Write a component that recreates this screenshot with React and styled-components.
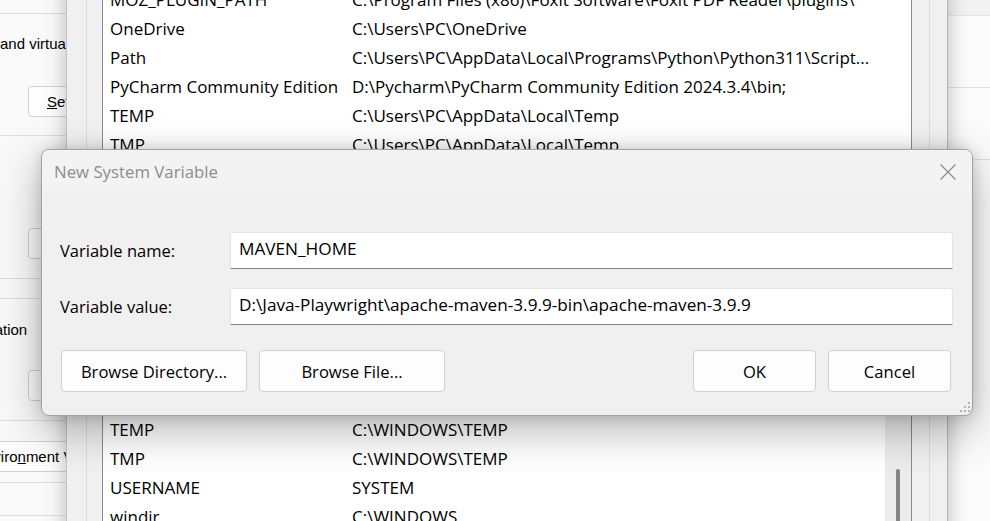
import React from 'react'
import styled, {createGlobalStyle} from 'styled-components'

const GlobalStyle = createGlobalStyle`
  html, body {
    margin: 0;
    padding: 0;
  }
  body {
    width: 990px;
    height: 521px;
    overflow: hidden;
    font-family: "Open Sans", "Noto Sans", sans-serif;
  }
`

const userVars = [
    ['MOZ_PLUGIN_PATH', 'C:\\Program Files (x86)\\Foxit Software\\Foxit PDF Reader\\plugins\\'],
    ['OneDrive', 'C:\\Users\\PC\\OneDrive'],
    ['Path', 'C:\\Users\\PC\\AppData\\Local\\Programs\\Python\\Python311\\Script...'],
    ['PyCharm Community Edition', 'D:\\Pycharm\\PyCharm Community Edition 2024.3.4\\bin;'],
    ['TEMP', 'C:\\Users\\PC\\AppData\\Local\\Temp'],
    ['TMP', 'C:\\Users\\PC\\AppData\\Local\\Temp'],
]

// rows above TEMP are scrolled under the dialog, so only an offset is kept
const systemVars = [
    ['TEMP', 'C:\\WINDOWS\\TEMP'],
    ['TMP', 'C:\\WINDOWS\\TEMP'],
    ['USERNAME', 'SYSTEM'],
    ['windir', 'C:\\WINDOWS'],
]

function App() {
  return (
    <Desktop>
        <GlobalStyle />

        <BackWindow>
            <BackSection $h={14} />
            <BackSection $h={122} $pt={20}>
                <BackText>and virtual memory</BackText>
                <BackButton $mt={32}><u>S</u>ettings...</BackButton>
            </BackSection>
            <BackSection $h={143} $pt={92}>
                <BackButton />
            </BackSection>
            <BackSection $h={20} />
            <BackSection $h={122} $pt={21}>
                <BackText $indent={-47}>information</BackText>
                <BackButton $mt={30} />
            </BackSection>
            <BackSection $h={62} $pt={20}>
                <BackButton $shift={-38}>Enviro<u>n</u>ment Variables...</BackButton>
            </BackSection>
            <BackSection $h={33} />
        </BackWindow>

        <SideWindow>
            <SideBand />
            <SideBlock />
            <SideBlock />
        </SideWindow>

        <EnvWindow>
            <Group>
                <VarList $h={232}>
                    <Rows>
                        {userVars.map(([name, value]) => (
                            <Row key={name}>
                                <NameCell>{name}</NameCell>
                                <ValueCell>{value}</ValueCell>
                            </Row>
                        ))}
                    </Rows>
                </VarList>
                <HiddenGap />
                <VarList $h={260}>
                    <Rows $offset={87}>
                        {systemVars.map(([name, value]) => (
                            <Row key={name}>
                                <NameCell>{name}</NameCell>
                                <ValueCell>{value}</ValueCell>
                            </Row>
                        ))}
                    </Rows>
                    <ScrollTrack>
                        <ScrollThumb />
                    </ScrollTrack>
                </VarList>
            </Group>
        </EnvWindow>

        <Dialog>
            <TitleBar>
                <Title>New System Variable</Title>
                <CloseBox>
                    <svg width="16" height="16" viewBox="0 0 16 16">
                        <path d="M0.5 0.5 L15.5 15.5 M15.5 0.5 L0.5 15.5" stroke="#8a8a8a" strokeWidth="1.1" fill="none" />
                    </svg>
                </CloseBox>
            </TitleBar>
            <Body>
                <Field>
                    <Label>Variable name:</Label>
                    <TextBox defaultValue="MAVEN_HOME" />
                </Field>
                <Field>
                    <Label>Variable value:</Label>
                    <TextBox defaultValue="D:\Java-Playwright\apache-maven-3.9.9-bin\apache-maven-3.9.9" />
                </Field>
                <ButtonRow>
                    <Button>Browse Directory...</Button>
                    <Button>Browse File...</Button>
                    <Spacer />
                    <Button $w={123}>OK</Button>
                    <Button $w={123}>Cancel</Button>
                </ButtonRow>
            </Body>
            <Grip>
                <svg width="12" height="12" viewBox="0 0 12 12">
                    <rect x="9" y="0" width="2" height="2" fill="#b4b4b4" />
                    <rect x="5" y="4" width="2" height="2" fill="#b4b4b4" />
                    <rect x="9" y="4" width="2" height="2" fill="#b4b4b4" />
                    <rect x="1" y="8" width="2" height="2" fill="#b4b4b4" />
                    <rect x="5" y="8" width="2" height="2" fill="#b4b4b4" />
                    <rect x="9" y="8" width="2" height="2" fill="#b4b4b4" />
                </svg>
            </Grip>
        </Dialog>
    </Desktop>
  )
}

export default App

const Desktop = styled.div `
    position: relative;
    width: 990px;
    height: 521px;
    overflow: hidden;
    background: #f3f3f3;
`

const BackWindow = styled.div `
    position: absolute;
    left: 0;
    top: 0;
    width: 200px;
    height: 521px;
    background: #f9f9f9;
    display: flex;
    flex-direction: column;
    font-family: "Liberation Sans", Arial, sans-serif;
    font-size: 15px;
    color: #000;
`

const BackSection = styled.div `
    box-sizing: border-box;
    height: ${p => p.$h}px;
    flex: none;
    padding-top: ${p => p.$pt || 0}px;
    border-bottom: 1px solid #dedede;
    display: flex;
    flex-direction: column;
    align-items: flex-start;
    overflow: hidden;
`

const BackText = styled.div `
    line-height: 20px;
    white-space: nowrap;
    margin-left: ${p => p.$indent || 0}px;
`

const BackButton = styled.div `
    box-sizing: border-box;
    min-width: 90px;
    height: 31px;
    flex: none;
    margin-top: ${p => p.$mt || 0}px;
    margin-left: ${p => p.$shift !== undefined ? p.$shift : 28}px;
    padding: 0 18px 0 ${p => p.$shift !== undefined ? 12 : 18}px;
    border: 1px solid #d0d0d0;
    border-radius: 4px;
    background: #fdfdfd;
    display: flex;
    align-items: center;
    white-space: nowrap;
`

const SideWindow = styled.div `
    position: absolute;
    left: 930px;
    top: 0;
    width: 80px;
    height: 521px;
    background: #fbfbfb;
    display: flex;
    flex-direction: column;
`

const SideBand = styled.div `
    height: 15px;
    background: #f3f3f3;
    border-bottom: 1px solid #e6e6e6;
`

const SideBlock = styled.div `
    height: 71px;
    border-bottom: 1px solid #e0e0e0;
`

const EnvWindow = styled.div `
    position: absolute;
    left: 66px;
    top: -30px;
    width: 882px;
    height: 600px;
    box-sizing: border-box;
    padding: 0 17px 0 19px;
    background: #f0f0f0;
    border-left: 1px solid #c2c2c2;
    border-right: 1px solid #b4b4b4;
    box-shadow: 0 0 20px rgba(0, 0, 0, 0.26);
`

const Group = styled.div `
    height: 100%;
    box-sizing: border-box;
    padding: 14px 17px 0 15px;
    border-left: 1px solid #dadada;
    border-right: 1px solid #dadada;
    display: flex;
    flex-direction: column;
`

const VarList = styled.div `
    flex: none;
    height: ${p => p.$h}px;
    border: 1px solid #8a8a8a;
    background: #fff;
    display: flex;
    overflow: hidden;
`

const HiddenGap = styled.div `
    height: 109px;
    flex: none;
`

const Rows = styled.div `
    flex: 1;
    min-width: 0;
    padding-top: ${p => p.$offset || 0}px;
    display: flex;
    flex-direction: column;
`

const Row = styled.div `
    height: 29px;
    flex: none;
    display: flex;
    align-items: center;
    font-size: 17px;
    color: #000;
    white-space: nowrap;
`

const NameCell = styled.div `
    width: 249px;
    flex: none;
    box-sizing: border-box;
    padding-left: 7px;
    overflow: hidden;
`

const ValueCell = styled.div `
    flex: 1;
    overflow: hidden;
`

const ScrollTrack = styled.div `
    width: 26px;
    flex: none;
    box-sizing: border-box;
    padding: 141px 0 0 11px;
    background: #ececec;
`

const ScrollThumb = styled.div `
    width: 4px;
    height: 200px;
    border-radius: 2px;
    background: #858585;
`

const Dialog = styled.div `
    position: absolute;
    left: 41px;
    top: 149px;
    width: 932px;
    height: 267px;
    box-sizing: border-box;
    border: 1px solid #a2a2a2;
    border-radius: 8px;
    background: #f0f0f0;
    overflow: hidden;
    display: flex;
    flex-direction: column;
    box-shadow: 0 14px 44px rgba(0, 0, 0, 0.30), 0 0 14px rgba(0, 0, 0, 0.14);
`

const TitleBar = styled.div `
    height: 43px;
    flex: none;
    background: #f3f3f3;
    display: flex;
    align-items: center;
    padding-left: 12px;
`

const Title = styled.div `
    flex: 1;
    font-size: 16.8px;
    color: #8c8c8c;
`

const CloseBox = styled.div `
    width: 48px;
    height: 43px;
    display: flex;
    align-items: center;
    justify-content: center;
`

const Body = styled.div `
    flex: 1;
    box-sizing: border-box;
    padding: 39px 19px 23px 18px;
    display: flex;
    flex-direction: column;
    gap: 19px;
`

const Field = styled.div `
    display: flex;
    align-items: center;
`

const Label = styled.div `
    width: 170px;
    flex: none;
    font-size: 16.5px;
    color: #000;
`

const TextBox = styled.input `
    flex: 1;
    min-width: 0;
    height: 37px;
    box-sizing: border-box;
    margin: 0;
    padding: 0 8px 5px;
    border: 1px solid #e4e4e4;
    border-bottom-color: #858585;
    border-radius: 3px 3px 0 0;
    background: #fff;
    font-family: "Open Sans", "Noto Sans", sans-serif;
    font-size: 17.2px;
    color: #000;
    outline: none;
`

const ButtonRow = styled.div `
    display: flex;
    gap: 11px;
    margin: 6px 2px 0 1px;
`

const Spacer = styled.div `
    flex: 1;
`

const Button = styled.div `
    width: ${p => p.$w || 186}px;
    height: 42px;
    box-sizing: border-box;
    border: 1px solid #d0d0d0;
    border-radius: 4px;
    background: #fdfdfd;
    display: flex;
    align-items: center;
    justify-content: center;
    font-size: 16.6px;
    color: #000;

    & + & {
        margin-left: ${p => p.$w ? 1 : 0}px;
    }
`

const Grip = styled.div `
    position: absolute;
    right: 1px;
    bottom: 1px;
    width: 12px;
    height: 12px;
    display: flex;
`
